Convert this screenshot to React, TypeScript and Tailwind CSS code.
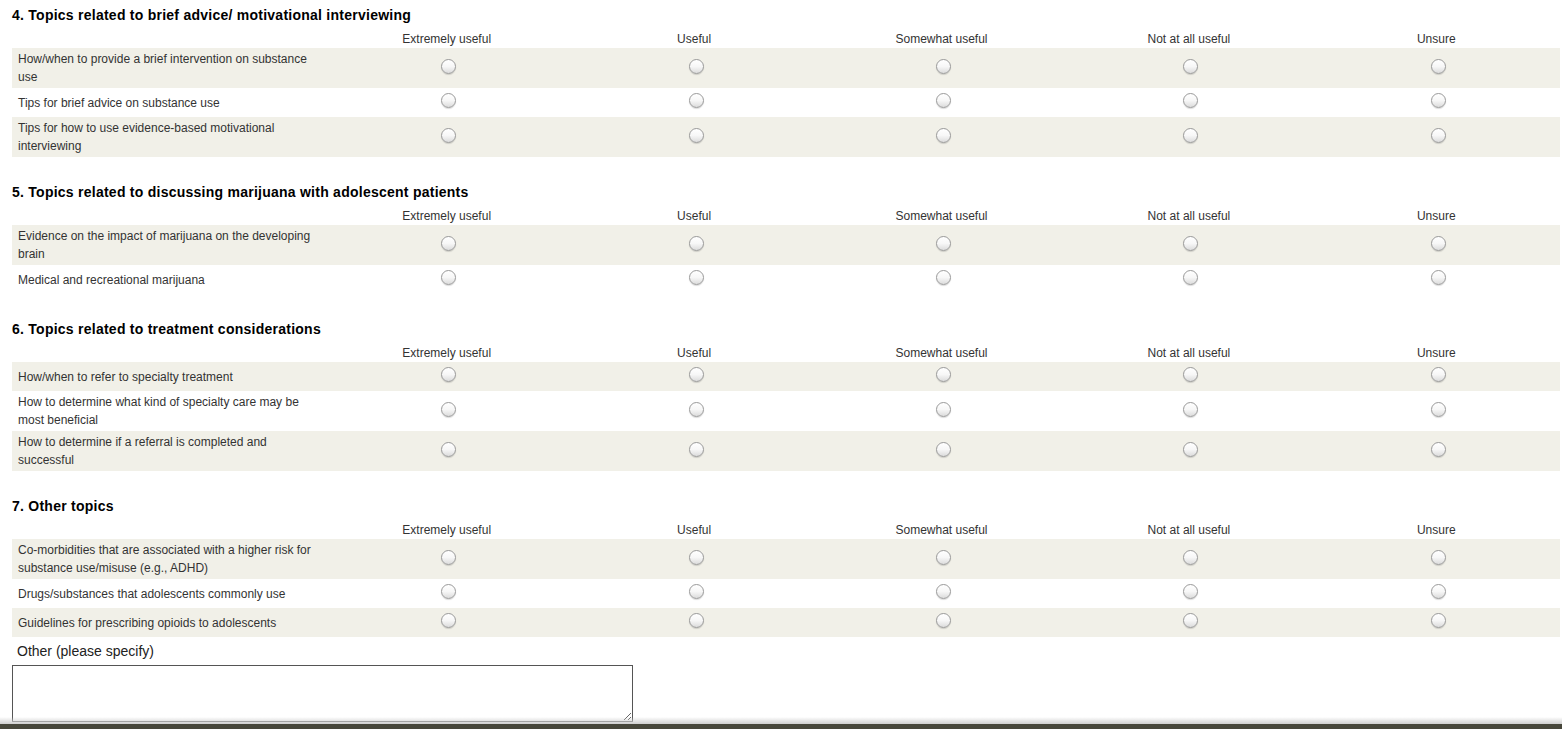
const columns = ['Extremely useful', 'Useful', 'Somewhat useful', 'Not at all useful', 'Unsure'];

const sections = [
  {
    title: '4. Topics related to brief advice/ motivational interviewing',
    rows: [
      'How/when to provide a brief intervention on substance use',
      'Tips for brief advice on substance use',
      'Tips for how to use evidence-based motivational interviewing',
    ],
  },
  {
    title: '5. Topics related to discussing marijuana with adolescent patients',
    rows: [
      'Evidence on the impact of marijuana on the developing brain',
      'Medical and recreational marijuana',
    ],
  },
  {
    title: '6. Topics related to treatment considerations',
    rows: [
      'How/when to refer to specialty treatment',
      'How to determine what kind of specialty care may be most beneficial',
      'How to determine if a referral is completed and successful',
    ],
  },
  {
    title: '7. Other topics',
    rows: [
      'Co-morbidities that are associated with a higher risk for substance use/misuse (e.g., ADHD)',
      'Drugs/substances that adolescents commonly use',
      'Guidelines for prescribing opioids to adolescents',
    ],
  },
];

function Radio({ name }: { name: string }) {
  return (
    <input
      type="radio"
      name={name}
      className="appearance-none w-[15px] h-[15px] rounded-full border border-[#9a9a9a] bg-gradient-to-b from-white via-[#f7f7f7] to-[#dcdcdc] shadow-[0_1px_1px_rgba(0,0,0,0.15)] m-0 mb-[4px]"
    />
  );
}

function Matrix({ title, rows, idx }: { title: string; rows: string[]; idx: number }) {
  return (
    <div className={idx === 0 ? 'mt-[5px]' : 'mt-[25px]'}>
      <h2 className="text-[14px] leading-[20px] font-bold text-black tracking-[0.25px]">{title}</h2>
      <div className="grid grid-cols-[311px_repeat(5,1fr)] h-[23px] items-end">
        <div />
        {columns.map(c => (
          <div key={c} className="text-center text-[12px] leading-[18px] text-[#333]">{c}</div>
        ))}
      </div>
      {rows.map((r, i) => (
        <div
          key={r}
          className={`grid grid-cols-[311px_repeat(5,1fr)] min-h-[29px] items-center ${i % 2 === 0 ? 'bg-[#f1f0e8]' : 'bg-white'}`}
        >
          <div className="px-[6px] py-[2px] text-[12px] leading-[18px] text-[#333]">{r}</div>
          {columns.map(c => (
            <div key={c} className="flex justify-center pl-[4px]">
              <Radio name={`q${idx}-${i}`} />
            </div>
          ))}
        </div>
      ))}
    </div>
  );
}

export default function App() {
  return (
    <div className="min-h-screen bg-white pl-[12px] pr-[2px] font-['Liberation_Sans',Arial,sans-serif]">
      {sections.map((s, i) => (
        <Matrix key={s.title} title={s.title} rows={s.rows} idx={i} />
      ))}

      <div className="pl-[5px] pt-[5px] text-[14px] leading-[18px] text-[#222]">Other (please specify)</div>
      <textarea className="mt-[5px] block w-[621px] h-[57px] border border-[#555] bg-white resize-y" />

      <div className="fixed left-0 right-0 bottom-0 pointer-events-none">
        <div className="h-[7px] bg-gradient-to-b from-transparent to-[#cfcfcf]" />
        <div className="h-[5px] bg-[#47473b]" />
      </div>
    </div>
  );
}
